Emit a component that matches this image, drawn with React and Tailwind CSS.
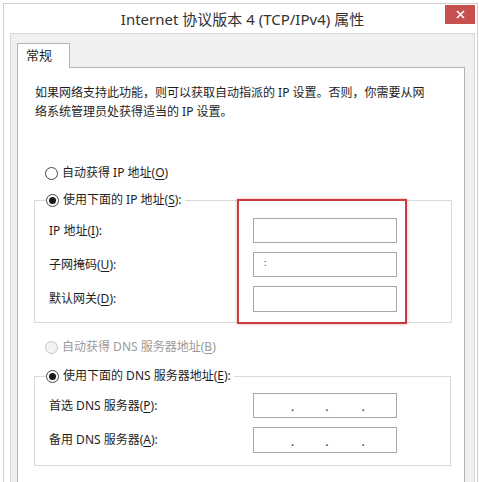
import React from 'react';

const FONT = "font-['Noto_Sans','Noto_Sans_CJK_SC',sans-serif]";

const Radio = ({ checked, disabled }) => (
  <span
    className={`w-[13px] h-[13px] rounded-full border flex items-center justify-center shrink-0 ${
      disabled ? 'border-[#c4c4c4] bg-[#f2f2f2]' : 'border-[#444] bg-white'
    }`}
  >
    {checked && <span className="w-[7px] h-[7px] rounded-full bg-[#1a1a1a]" />}
  </span>
);

const Key = ({ children }) => <span className="underline underline-offset-2 decoration-1">{children}</span>;

const RadioRow = ({ checked, disabled, children }) => (
  <div className={`h-[20px] flex items-center gap-[4px] ${disabled ? 'text-[#9a9a9a]' : 'text-[#1e1e1e]'}`}>
    <Radio checked={checked} disabled={disabled} />
    <span className="whitespace-nowrap">{children}</span>
  </div>
);

const Box = ({ children, tall }) => (
  <div className={`${tall ? 'h-[26px]' : 'h-[25px]'} w-[144px] border border-[#a8a8a8] bg-white flex items-end pb-[4px] leading-none`}>
    {children}
  </div>
);

const Dots = () => (
  <>
    <span className="ml-[37px]">.</span>
    <span className="ml-[31px]">.</span>
    <span className="ml-[33px]">.</span>
  </>
);

const Row = ({ label, children }) => (
  <div className="grid grid-cols-[204px_144px] items-center pl-[3px]">
    <span className="whitespace-nowrap">{label}</span>
    {children}
  </div>
);

export default function App() {
  return (
    <div className={`w-[479px] h-[482px] bg-white overflow-hidden pt-[3px] pl-[3px] ${FONT} text-[12px] text-[#1e1e1e]`}>
      <div className="w-[475px] h-[482px] border-l border-t border-r border-[#cfcfcf] bg-white flex flex-col">
        {/* title bar */}
        <div className="relative h-[29px] shrink-0 flex items-center justify-center">
          <span className="text-[15px] text-[#333] pl-[4px] pt-[1px]">Internet 协议版本 4 (TCP/IPv4) 属性</span>
          <div className="absolute right-[2px] top-[1px] w-[30px] h-[19px] bg-[#c75150] flex items-center justify-center">
            <svg width="9" height="9" viewBox="0 0 9 9">
              <path d="M1 1 L8 8 M8 1 L1 8" stroke="#fff" strokeWidth="1.6" />
            </svg>
          </div>
        </div>

        {/* client area */}
        <div className="ml-[6px] mr-[2px] flex-1 bg-[#f0f0f0] border-t border-l border-r border-[#d9d9d9] pt-[9px] pl-[6px] pr-[9px]">
          <div className="relative z-10 -mb-px w-[53px] h-[25px] bg-white border-t border-l border-r border-[#b4b4b4] pl-[8px] pt-[2px] text-[13px]">
            常规
          </div>
          <div className="h-[500px] bg-white border border-[#b4b4b4] pt-[15px]">
            <p className="pl-[17px] leading-[19px] whitespace-nowrap">
              如果网络支持此功能，则可以获取自动指派的 IP 设置。否则，你需要从网
              <br />
              络系统管理员处获得适当的 IP 设置。
            </p>

            <div className="mt-[42px] pl-[27px]">
              <RadioRow>
                自动获得 IP 地址(<Key>O</Key>)
              </RadioRow>
            </div>

            <fieldset className="ml-[16px] mr-[12px] mt-[7px] border border-[#d9d9d9] pl-[11px] pb-[10px]">
              <legend className="pr-[3px]">
                <RadioRow checked>
                  使用下面的 IP 地址(<Key>S</Key>):
                </RadioRow>
              </legend>
              <div className="relative mt-[8px] flex flex-col gap-[9px]">
                <div className="absolute left-[191px] top-[-19px] w-[170px] h-[125px] border-2 border-[#c73d3d] shadow-[0_0_3px_#f0a0a0]" />
                <Row label={<>IP 地址(<Key>I</Key>):</>}>
                  <Box />
                </Row>
                <Row label={<>子网掩码(<Key>U</Key>):</>}>
                  <Box>
                    <span className="ml-[10px] mb-[5px] text-[9px]">:</span>
                  </Box>
                </Row>
                <Row label={<>默认网关(<Key>D</Key>):</>}>
                  <Box tall />
                </Row>
              </div>
            </fieldset>

            <div className="mt-[14px] pl-[27px]">
              <RadioRow disabled>
                自动获得 DNS 服务器地址(<Key>B</Key>)
              </RadioRow>
            </div>

            <fieldset className="ml-[16px] mr-[13px] mt-[9px] border border-[#d9d9d9] pl-[11px] pb-[12px]">
              <legend className="pr-[3px]">
                <RadioRow checked>
                  使用下面的 DNS 服务器地址(<Key>E</Key>):
                </RadioRow>
              </legend>
              <div className="mt-[7px] flex flex-col gap-[9px]">
                <Row label={<>首选 DNS 服务器(<Key>P</Key>):</>}>
                  <Box>
                    <Dots />
                  </Box>
                </Row>
                <Row label={<>备用 DNS 服务器(<Key>A</Key>):</>}>
                  <Box tall>
                    <Dots />
                  </Box>
                </Row>
              </div>
            </fieldset>
          </div>
        </div>
      </div>
    </div>
  );
}
